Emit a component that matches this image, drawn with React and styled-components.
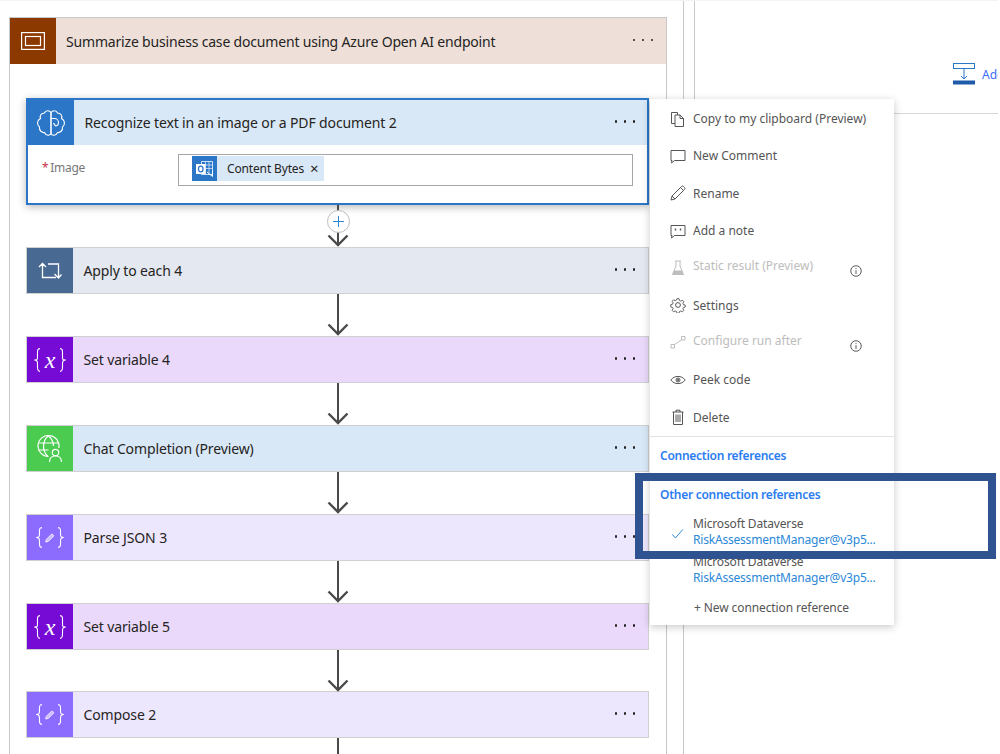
import React from 'react';
import styled, { createGlobalStyle } from 'styled-components';

const fontStack = '"Noto Sans", "Open Sans", "Liberation Sans", sans-serif';

function Stroke({ size = 16, children, width = 1 }) {
  return (
    <svg width={size} height={size} viewBox="0 0 16 16" fill="none" stroke="currentColor" strokeWidth={width}>
      {children}
    </svg>
  );
}

const menuIcons = {
  copy: (
    <Stroke>
      <path d="M1.5 1.5h6v2.500M5 4h5l3.500 3.500v8H5zM10 4v3.500h3.500M5 12.500H1.500v-11" />
    </Stroke>
  ),
  comment: (
    <Stroke>
      <path d="M1 2.500h14v10H4.500L1.500 15l.5-2.500H1z" />
    </Stroke>
  ),
  rename: (
    <Stroke>
      <path d="M1 15l1-4L11.500 1.500a1.400 1.400 0 0 1 2 0l1 1a1.400 1.400 0 0 1 0 2L5 14zM2 11l3 3M10.500 2.500l3 3" />
    </Stroke>
  ),
  note: (
    <Stroke>
      <path d="M1 2.500h14v10H4.500L1.500 15l.5-2.500H1z" />
      <path d="M5.500 5.500v2M10.500 5.500v2" strokeWidth="1.400" />
    </Stroke>
  ),
  flask: (
    <Stroke>
      <path d="M5 1h6M6 1v5L2.500 14.500h11L10 6V1" />
      <path d="M4 10.500h8l1.500 4.500h-11z" fill="currentColor" stroke="none" />
    </Stroke>
  ),
  gear: (
    <Stroke>
      <circle cx="8" cy="8" r="2.400" />
      <path d="M6.800 1h2.400l.4 2 1.500.7 1.800-1 1.600 1.700-1.100 1.700.6 1.500 2 .4v2.300l-2 .4-.6 1.500 1.100 1.700-1.600 1.700-1.800-1-1.500.7-.4 1.900H6.800l-.4-1.900-1.500-.7-1.800 1-1.600-1.700 1.100-1.700-.6-1.500-2-.4V7.500l2-.4.6-1.500-1.100-1.700 1.600-1.700 1.800 1 1.500-.7z" transform="translate(.8 .8) scale(.9)" />
    </Stroke>
  ),
  runAfter: (
    <Stroke>
      <path d="M1 10.500h3.500V14H1zM11.500 2.500H15V6h-3.500zM4.500 10.500L11.500 6" />
    </Stroke>
  ),
  eye: (
    <Stroke>
      <path d="M.8 8C4.500 3.200 11.500 3.200 15.200 8 11.500 12.800 4.500 12.800.8 8z" />
      <circle cx="8" cy="8" r="2" />
      <circle cx="8" cy="8" r=".7" fill="currentColor" />
    </Stroke>
  ),
  trash: (
    <Stroke>
      <path d="M2.500 3h11M6 3V1.200h4V3M3.500 3v12.500h9V3M6 5.500v7.500M8 5.500v7.500M10 5.500v7.500" />
    </Stroke>
  ),
};

function InfoIcon() {
  return (
    <Stroke size={12}>
      <circle cx="8" cy="8" r="7" strokeWidth="1.300" />
      <path d="M8 7v5M8 4.200v1.300" strokeWidth="1.300" />
    </Stroke>
  );
}

function CheckIcon() {
  return (
    <Stroke size={13}>
      <path d="M1.500 9l4 4.500L14.500 3" strokeWidth="1.200" />
    </Stroke>
  );
}

function ScopeIcon() {
  return (
    <svg width="24" height="18" viewBox="0 0 24 18" fill="none" stroke="#fff" strokeWidth="1.200">
      <rect x=".6" y=".6" width="22.800" height="16.800" />
      <rect x="4.500" y="4.500" width="15" height="9" />
    </svg>
  );
}

function BrainIcon() {
  return (
    <svg width="30" height="28" viewBox="0 0 30 28" fill="none" stroke="#fff" strokeWidth="1.100">
      <path d="M15 3.500C13.500 1 9.500 1 8.500 4 5 4 3.500 7 4.500 9.500 1 11 .5 16 3.500 18 3 21.500 6 24 8.500 23.500 10 27 14 27 15 24.500z" />
      <path d="M15 3.500C16.500 1 20.500 1 21.500 4 25 4 26.500 7 25.500 9.500 29 11 29.500 16 26.500 18 27 21.500 24 24 21.500 23.500 20 27 16 27 15 24.500z" />
      <path d="M15 9.500h3.500c2.500 0 4 2 4 4s-1.500 3.500-3.500 3.500" />
      <path d="M19 17c0-1.500-1-2.500-2-2.500" />
    </svg>
  );
}

function LoopIcon() {
  return (
    <svg width="24" height="18" viewBox="0 0 24 18" fill="none" stroke="#fff" strokeWidth="1.300">
      <path d="M1 5l3.500-3.500L8 5M4.500 2v13.500H18M10 2h10.500v13M16.500 12l4 4 3-3.500" />
    </svg>
  );
}

function GlobeUserIcon() {
  return (
    <svg width="26" height="28" viewBox="0 0 26 28" fill="none" stroke="#fff" strokeWidth="1.200">
      <path d="M11.500 21.500a10.500 10.500 0 1 1 10.300-8.500" />
      <path d="M1.500 8h20M1.500 15h10M11 1c-6 5.500-6 15 0 20.500M11.500 1c3.500 3 5 7 5 10" />
      <circle cx="18.500" cy="17.500" r="3.200" />
      <path d="M12.500 27c0-4 2.500-6 6-6s6 2 6 6" />
    </svg>
  );
}

// one curly brace, flipped for the closing side
function Brace({ height, flip }) {
  const mid = height / 2;
  const d = `M6 .6C3 .6 3.500 3 3.500 ${mid - 4}S3 ${mid - 0.6} .8 ${mid}C3 ${mid + 0.6} 3.500 ${mid + 1} 3.500 ${mid + 4}S3 ${height - 0.6} 6 ${height - 0.6}`;
  return (
    <svg width="7" height={height} viewBox={`0 0 7 ${height}`} style={flip ? { transform: 'scaleX(-1)' } : undefined}>
      <path d={d} fill="none" stroke="#fff" strokeWidth="1.100" />
    </svg>
  );
}

function VariableIcon() {
  return (
    <GlyphRow>
      <Brace height={24} />
      <VariableX>x</VariableX>
      <Brace height={24} flip />
    </GlyphRow>
  );
}

function DataOperationIcon() {
  return (
    <GlyphRow>
      <Brace height={21} />
      <svg width="10" height="11" viewBox="0 0 10 11">
        <path d="M.7 10l.6-2.600 5-5a1 1 0 0 1 1.400 0l.6.600a1 1 0 0 1 0 1.400l-5 5z" fill="#fff" fillOpacity=".55" stroke="#fff" strokeWidth=".8" />
      </svg>
      <Brace height={21} flip />
    </GlyphRow>
  );
}

function OutlookIcon() {
  return (
    <svg width="18" height="18" viewBox="0 0 18 18" fill="none">
      <path d="M5.500 1.500h11v13h-11z" stroke="#cfe2f6" strokeWidth="1" />
      <path d="M5.500 5h11M5.500 8.500h11M9.500 1.500v13M13 1.500v13" stroke="#cfe2f6" strokeWidth=".8" />
      <rect x="0" y="4" width="9.500" height="10" fill="#fff" />
      <ellipse cx="4.750" cy="9" rx="2.300" ry="2.900" stroke="#2b76c7" strokeWidth="1.300" />
      <path d="M11 12l5.500 4.500V11" stroke="#fff" strokeWidth="1" />
    </svg>
  );
}

function AddActionIcon() {
  return (
    <svg width="22" height="22" viewBox="0 0 22 22" fill="none">
      <rect x=".5" y=".5" width="21" height="5" stroke="#2b76c7" />
      <path d="M11 6v10M8 13l3 3 3-3" stroke="#2b76c7" />
      <rect y="17.500" width="22" height="4" fill="#1f5bab" />
    </svg>
  );
}

function PlusIcon() {
  return (
    <svg width="11" height="11" viewBox="0 0 11 11" stroke="#2b88d8">
      <path d="M5.500 0v11M0 5.500h11" />
    </svg>
  );
}

function ArrowIcon() {
  return (
    <svg width="22" height="42" viewBox="0 0 22 42" fill="none" stroke="#4a4a4a">
      <path d="M11 0v41" strokeWidth="2" />
      <path d="M1.500 30.500L11 40l9.500-9.500" strokeWidth="2.400" />
    </svg>
  );
}

function Dots() {
  return (
    <DotRow>
      <Dot />
      <Dot />
      <Dot />
    </DotRow>
  );
}

const steps = [
  { title: 'Apply to each 4', bg: '#e4e8f0', tile: '#486991', icon: <LoopIcon /> },
  { title: 'Set variable 4', bg: '#ead9fa', tile: '#770bd6', icon: <VariableIcon /> },
  { title: 'Chat Completion (Preview)', bg: '#d9e8f7', tile: '#4bcb50', icon: <GlobeUserIcon /> },
  { title: 'Parse JSON 3', bg: '#ede7fd', tile: '#8c6cff', icon: <DataOperationIcon /> },
  { title: 'Set variable 5', bg: '#ead9fa', tile: '#770bd6', icon: <VariableIcon /> },
  { title: 'Compose 2', bg: '#ede7fd', tile: '#8c6cff', icon: <DataOperationIcon /> },
];

const menuItems = [
  { icon: 'copy', label: 'Copy to my clipboard (Preview)' },
  { icon: 'comment', label: 'New Comment' },
  { icon: 'rename', label: 'Rename' },
  { icon: 'note', label: 'Add a note' },
  { icon: 'flask', label: 'Static result (Preview)', disabled: true },
  { icon: 'gear', label: 'Settings' },
  { icon: 'runAfter', label: 'Configure run after', disabled: true },
  { icon: 'eye', label: 'Peek code' },
  { icon: 'trash', label: 'Delete' },
];

export default function App() {
  return (
    <Page>
      <GlobalStyle />
      <Canvas>
        <Scope>
          <ScopeHeader>
            <Tile $color="#8c3900">
              <ScopeIcon />
            </Tile>
            <ScopeTitle>Summarize business case document using Azure Open AI endpoint</ScopeTitle>
            <Dots />
          </ScopeHeader>
          <ScopeBody>
            <SelectedCard>
              <CardHeader $bg="#d9e8f6">
                <Tile $color="#2b76c7">
                  <BrainIcon />
                </Tile>
                <StepTitle>Recognize text in an image or a PDF document 2</StepTitle>
                <Dots />
              </CardHeader>
              <CardBody>
                <FieldLabel>
                  <Required>*</Required>Image
                </FieldLabel>
                <TokenInput>
                  <Token>
                    <TokenIcon>
                      <OutlookIcon />
                    </TokenIcon>
                    <TokenText>Content Bytes</TokenText>
                    <TokenClose>×</TokenClose>
                  </Token>
                </TokenInput>
              </CardBody>
            </SelectedCard>
            {steps.map((step, i) => (
              <React.Fragment key={step.title}>
                <Connector $height={i === 5 ? 41 : 42}>
                  <ArrowIcon />
                  {i === 0 && (
                    <AddButton>
                      <PlusIcon />
                    </AddButton>
                  )}
                </Connector>
                <StepCard $bg={step.bg}>
                  <Tile $color={step.tile}>{step.icon}</Tile>
                  <StepTitle>{step.title}</StepTitle>
                  <Dots />
                </StepCard>
              </React.Fragment>
            ))}
            <Connector $height={42}>
              <ArrowIcon />
            </Connector>
          </ScopeBody>
        </Scope>
      </Canvas>

      <SidePanel>
        <AddAction>
          <AddActionIcon />
          <AddLabel>Add an action</AddLabel>
        </AddAction>
      </SidePanel>

      <Menu>
        {menuItems.map((item) => (
          <MenuItem key={item.label} $disabled={item.disabled}>
            <MenuIcon>{menuIcons[item.icon]}</MenuIcon>
            <MenuLabel $disabled={item.disabled}>{item.label}</MenuLabel>
            {item.disabled && (
              <InfoSlot>
                <InfoIcon />
              </InfoSlot>
            )}
          </MenuItem>
        ))}
        <MenuDivider />
        <SectionLabel>Connection references</SectionLabel>
        <SectionLabel>Other connection references</SectionLabel>
        <ConnectionRow>
          <CheckSlot>
            <CheckIcon />
          </CheckSlot>
          <ConnectionName>Microsoft Dataverse</ConnectionName>
          <ConnectionAccount>RiskAssessmentManager@v3p5...</ConnectionAccount>
        </ConnectionRow>
        <ConnectionRow>
          <ConnectionName>Microsoft Dataverse</ConnectionName>
          <ConnectionAccount>RiskAssessmentManager@v3p5...</ConnectionAccount>
        </ConnectionRow>
        <NewConnection>+ New connection reference</NewConnection>
      </Menu>

      <Highlight />
    </Page>
  );
}

const GlobalStyle = createGlobalStyle`
  html, body {
    margin: 0;
    background: #fff;
    overflow: hidden;
  }

  * {
    box-sizing: border-box;
  }
`;

const Page = styled.div`
  position: relative;
  display: flex;
  width: 998px;
  height: 754px;
  overflow: hidden;
  border-top: 1px solid #f4f4f4;
  font-family: ${fontStack};
  color: #252423;
`;

const Canvas = styled.div`
  flex: none;
  width: 684px;
  padding: 16px 0 0 9px;
  border-right: 1px solid #c8c8c8;
`;

const Scope = styled.div`
  width: 658px;
  height: 800px;
  border: 1px solid #c8c8c8;
  background: #fff;
`;

const ScopeHeader = styled.div`
  display: flex;
  align-items: center;
  height: 46px;
  padding-right: 13px;
  background: #eee0d8;
`;

const Tile = styled.div`
  flex: none;
  display: flex;
  align-items: center;
  justify-content: center;
  width: 46px;
  align-self: stretch;
  background: ${(p) => p.$color};
`;

const GlyphRow = styled.div`
  display: flex;
  align-items: center;
  gap: 2px;
`;

const VariableX = styled.em`
  width: 14px;
  font-family: "Liberation Serif", serif;
  font-size: 24px;
  line-height: 24px;
  text-align: center;
  color: #fff;
`;

const ScopeTitle = styled.div`
  flex: 1;
  padding-left: 10px;
  font-size: 14px;
  letter-spacing: -0.18px;
  white-space: nowrap;
`;

const StepTitle = styled.div`
  flex: 1;
  padding-left: 10.5px;
  font-size: 14px;
  letter-spacing: -0.13px;
  white-space: nowrap;
`;

const DotRow = styled.div`
  flex: none;
  display: flex;
  gap: 6.5px;
  margin-bottom: 2px;
`;

const Dot = styled.span`
  width: 2.5px;
  height: 2.5px;
  border-radius: 50%;
  background: #252423;
`;

const ScopeBody = styled.div`
  display: flex;
  flex-direction: column;
  width: 623px;
  margin-left: 16px;
  padding-top: 34px;
`;

const SelectedCard = styled.div`
  height: 107px;
  border: 2px solid #2b76c7;
  background: #fff;
  box-shadow: 0 2px 8px rgba(0, 0, 0, 0.28);
`;

const CardHeader = styled.div`
  display: flex;
  align-items: center;
  height: 45px;
  padding-right: 12px;
  background: ${(p) => p.$bg};
`;

const CardBody = styled.div`
  display: flex;
  align-items: flex-start;
  padding: 9px 14px 0 14px;
`;

const FieldLabel = styled.div`
  width: 136px;
  padding-top: 5px;
  font-size: 12px;
  letter-spacing: -0.3px;
  color: #777;
`;

const Required = styled.span`
  margin-right: 2px;
  color: #c4314b;
`;

const TokenInput = styled.div`
  flex: 1;
  height: 32px;
  padding: 1px 13px;
  border: 1px solid #a6a6a6;
`;

const Token = styled.div`
  display: inline-flex;
  align-items: center;
  height: 25px;
  background: #d9e8f6;
`;

const TokenIcon = styled.div`
  display: flex;
  align-items: center;
  justify-content: center;
  width: 25px;
  height: 25px;
  background: #2b76c7;
`;

const TokenText = styled.span`
  padding-left: 10px;
  font-size: 12px;
  letter-spacing: -0.15px;
`;

const TokenClose = styled.span`
  padding: 0 5px 0 6px;
  font-size: 15px;
  line-height: 1;
`;

const Connector = styled.div`
  position: relative;
  flex: none;
  display: flex;
  justify-content: center;
  height: ${(p) => p.$height}px;
  margin-left: 1px;
`;

const AddButton = styled.div`
  position: absolute;
  top: 5px;
  left: 50%;
  display: flex;
  align-items: center;
  justify-content: center;
  width: 23px;
  height: 23px;
  margin-left: -11.5px;
  border: 1px solid #bdbdbd;
  border-radius: 50%;
  background: #fff;
`;

const StepCard = styled.div`
  flex: none;
  display: flex;
  align-items: center;
  height: 47px;
  padding-right: 13px;
  border: 1px solid #d0d0d0;
  background: ${(p) => p.$bg};
`;

const SidePanel = styled.div`
  flex: 1;
  min-width: 0;
  height: 113px;
  margin-left: 10px;
  border-left: 1px solid #c8c8c8;
  border-bottom: 1px solid #d8d8d8;
  overflow: hidden;
`;

const AddAction = styled.div`
  display: flex;
  align-items: center;
  gap: 7px;
  padding: 62px 0 0 258px;

  svg {
    flex: none;
  }
`;

const AddLabel = styled.span`
  flex: none;
  font-size: 12px;
  color: #3b6cf5;
  white-space: nowrap;
`;

const Menu = styled.div`
  position: absolute;
  top: 98px;
  left: 650px;
  width: 244px;
  height: 526px;
  padding-top: 1px;
  background: #fff;
  box-shadow: 0 2px 8px rgba(0, 0, 0, 0.22);
`;

const MenuItem = styled.div`
  position: relative;
  display: flex;
  align-items: center;
  gap: 7px;
  height: 37.3px;
  padding-left: 20px;
  color: ${(p) => (p.$disabled ? '#bdbdbd' : '#555')};
`;

const MenuIcon = styled.div`
  flex: none;
  display: flex;
  width: 16px;
  height: 16px;
`;

const MenuLabel = styled.span`
  font-size: 12px;
  white-space: nowrap;
  margin-bottom: ${(p) => (p.$disabled ? '4px' : '0')};
`;

const InfoSlot = styled.div`
  position: absolute;
  left: 200px;
  top: 16px;
  display: flex;
  color: #555;
`;

const MenuDivider = styled.div`
  height: 1px;
  margin-bottom: -1px;
  background: #e3e3e3;
`;

const SectionLabel = styled.div`
  display: flex;
  align-items: center;
  height: 39px;
  padding-left: 10px;
  font-size: 12px;
  font-weight: 600;
  letter-spacing: -0.27px;
  color: #2b7cf0;
`;

const ConnectionRow = styled.div`
  position: relative;
  display: flex;
  flex-direction: column;
  justify-content: center;
  height: 38px;
  padding: 0 0 2px 43px;
`;

const CheckSlot = styled.div`
  position: absolute;
  left: 21px;
  top: 13px;
  display: flex;
  color: #2b88d8;
`;

const ConnectionName = styled.span`
  font-size: 12px;
  line-height: 16px;
  letter-spacing: -0.15px;
  color: #555;
`;

const ConnectionAccount = styled.span`
  font-size: 12px;
  line-height: 16px;
  letter-spacing: -0.2px;
  color: #2b88d8;
  white-space: nowrap;
`;

const NewConnection = styled.div`
  padding: 9px 0 0 44px;
  font-size: 12px;
  letter-spacing: -0.1px;
  color: #555;
`;

const Highlight = styled.div`
  position: absolute;
  top: 472px;
  left: 635px;
  width: 361px;
  height: 86px;
  border: 8px solid #2f5290;
  pointer-events: none;
`;
